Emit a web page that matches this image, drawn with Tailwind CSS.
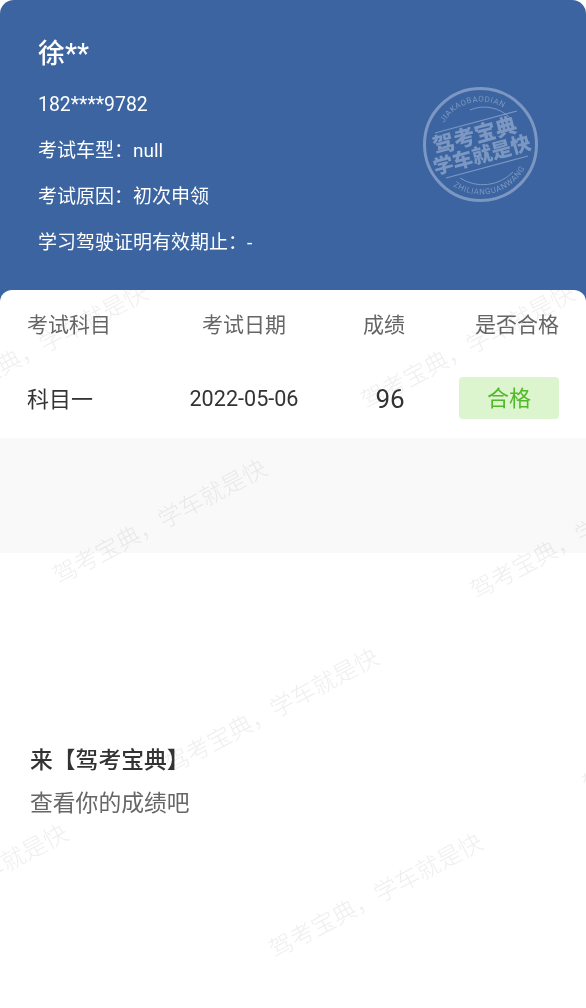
<!DOCTYPE html>
<html lang="en">
<head>
    <meta charset="UTF-8">
    <meta name="viewport" content="width=device-width, initial-scale=1.0">
    <title>成绩查询</title>
    <script src="https://cdn.jsdelivr.net/npm/@tailwindcss/browser@4"></script>
</head>
<body class="bg-white">
<div class="relative w-[586px] h-[1008px] overflow-hidden bg-white font-['Roboto','Noto_Sans_CJK_SC',sans-serif]">

    <!-- Header -->
    <header class="relative h-[302px] bg-[#3b64a0] rounded-t-[14px] pl-[38px] pt-[36px] text-white">
        <h1 class="text-[27px] leading-[36px] font-medium">徐**</h1>
        <div class="mt-[19px] flex flex-col gap-[18px] text-[19px] leading-[28px]">
            <p class="text-[19.4px]">182****9782</p>
            <p>考试车型：null</p>
            <p>考试原因：初次申领</p>
            <p>学习驾驶证明有效期止：-</p>
        </div>

        <!-- Stamp -->
        <svg class="absolute left-[422px] top-[86px]" width="117" height="117" viewBox="0 0 117 117" fill="none">
            <defs>
                <path id="arcTop" d="M22 37 A43 43 0 0 1 80 21"/>
                <path id="arcBottom" d="M31 100 A50 50 0 0 0 103 82"/>
            </defs>
            <circle cx="58.5" cy="58.5" r="56" stroke="#7c97c2" stroke-width="3"/>
            <path d="M13 47 L95 25 M24 92 L106 70" stroke="#7c97c2" stroke-width="1.2"/>
            <path d="M38 92 A42 42 0 0 0 91 86" stroke="#7c97c2" stroke-width="1"/>
            <path d="M48 24 A36 36 0 0 1 88 32" stroke="#7c97c2" stroke-width="1"/>
            <text font-size="8" fill="#7c97c2" font-family="Roboto"><textPath href="#arcTop" textLength="68">JIAKAOBAODIAN</textPath></text>
            <text font-size="8" fill="#7c97c2" font-family="Roboto"><textPath href="#arcBottom" textLength="83">ZHILIANGUANWANG</textPath></text>
            <text x="53" y="57" transform="rotate(-15 53 50)" text-anchor="middle" font-size="21.5" font-weight="900" fill="#7c97c2" font-family="Noto Sans CJK SC">驾考宝典</text>
            <text x="60" y="76" transform="rotate(-15 60 69)" text-anchor="middle" font-size="20" font-weight="900" fill="#7c97c2" font-family="Noto Sans CJK SC">学车就是快</text>
        </svg>
    </header>

    <!-- Score table -->
    <section class="relative -mt-[12px] rounded-t-[12px] bg-white">
        <div class="grid grid-cols-[133px_168px_112px_119px] items-center h-[70px] pt-[2px] px-[27px] text-[21px] text-[#666666]">
            <span>考试科目</span>
            <span class="text-center">考试日期</span>
            <span class="text-center">成绩</span>
            <span class="text-right">是否合格</span>
        </div>
        <div class="grid grid-cols-[133px_168px_112px_119px] items-center h-[78px] px-[27px] text-[#333333]">
            <span class="text-[22px]">科目一</span>
            <span class="text-center text-[21.6px]">2022-05-06</span>
            <span class="text-center text-[26px] pl-[12px]">96</span>
            <span class="justify-self-end flex items-center justify-center w-[100px] h-[42px] -mt-[2px] rounded-[4px] bg-[#dcf5cf] text-[22px] text-[#52b928]">合格</span>
        </div>
    </section>
    <div class="h-[115px] bg-[#f9f9f9]"></div>

    <!-- Prompt -->
    <section class="pl-[30px] pt-[192px]">
        <p class="text-[22.8px] leading-[32px] font-medium text-[#333333]">来【驾考宝典】</p>
        <p class="mt-[11px] text-[22.8px] leading-[32px] text-[#666666]">查看你的成绩吧</p>
    </section>

    <!-- Watermarks, clipped to the area below the header -->
    <div class="absolute left-0 right-0 top-[290px] bottom-0 overflow-hidden pointer-events-none mix-blend-multiply text-[23.8px] leading-[32px] text-[#efefef] font-light whitespace-nowrap">
        <span class="absolute left-[-78px] top-[40px] -rotate-[28deg]">驾考宝典，学车就是快</span>
        <span class="absolute left-[349px] top-[41px] -rotate-[28deg]">驾考宝典，学车就是快</span>
        <span class="absolute left-[41px] top-[216px] -rotate-[28deg]">驾考宝典，学车就是快</span>
        <span class="absolute left-[458px] top-[231px] -rotate-[28deg]">驾考宝典，学车就是快</span>
        <span class="absolute left-[153px] top-[405px] -rotate-[28deg]">驾考宝典，学车就是快</span>
        <span class="absolute left-[570px] top-[425px] -rotate-[28deg]">驾考宝典，学车就是快</span>
        <span class="absolute left-[-158px] top-[581px] -rotate-[28deg]">驾考宝典，学车就是快</span>
        <span class="absolute left-[257px] top-[590px] -rotate-[28deg]">驾考宝典，学车就是快</span>
    </div>
</div>
</body>
</html>
